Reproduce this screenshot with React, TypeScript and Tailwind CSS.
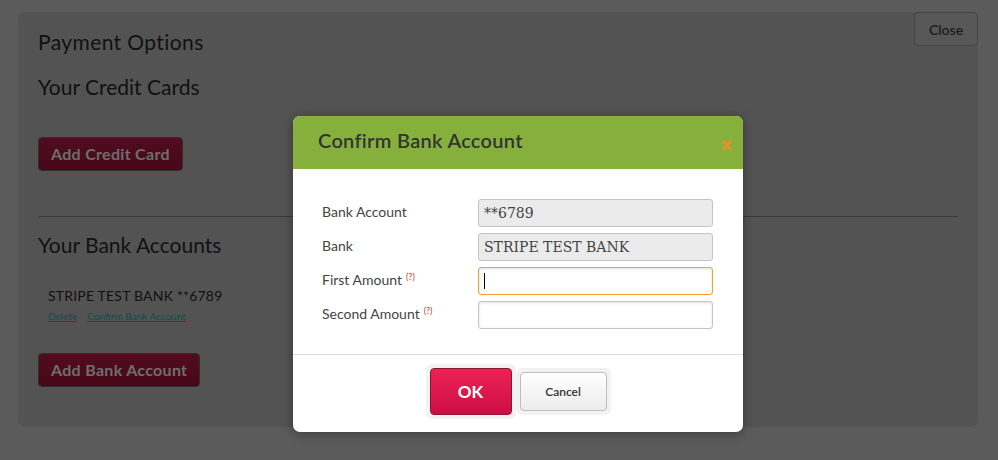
import React from "react";

const sans = { fontFamily: "Lato, 'Open Sans', sans-serif" };

function DimButton({ label }: { label: string }) {
  return (
    <button
      type="button"
      className="h-[34px] rounded-[4px] border border-[#2e2e2e] bg-gradient-to-b from-[#520c20] to-[#460819] px-[12px] text-[16px] font-bold tracking-[0.3px] text-[#6e6e6e]"
    >
      {label}
    </button>
  );
}

function Field({
  label,
  hint,
  value,
  readOnly,
  focused,
}: {
  label: string;
  hint?: boolean;
  value?: string;
  readOnly?: boolean;
  focused?: boolean;
}) {
  return (
    <div className="flex items-center">
      <div className="w-[156px] pb-[4px] text-[14px] text-[#444]">
        {label}
        {hint && <sup className="ml-[4px] text-[9px] text-[#e0302a]">(?)</sup>}
      </div>
      {readOnly ? (
        <div
          className="flex h-[28px] w-[235px] items-center rounded-[3px] border border-[#c4c4c4] bg-[#ebebeb] px-[5px] text-[14px] text-[#444]"
          style={{ fontFamily: "'DejaVu Serif', 'Liberation Serif', serif" }}
        >
          {value}
        </div>
      ) : (
        <div
          className={
            focused
              ? "flex h-[28px] w-[235px] items-center rounded-[3px] border border-[#f5a033] bg-white px-[5px] shadow-[inset_0_1px_3px_rgba(0,0,0,0.12)]"
              : "flex h-[28px] w-[235px] items-center rounded-[3px] border border-[#c4c4c4] bg-white px-[5px] shadow-[inset_0_1px_3px_rgba(0,0,0,0.12)]"
          }
        >
          {focused && <span className="h-[16px] w-px bg-black" />}
        </div>
      )}
    </div>
  );
}

export default function App() {
  return (
    <div className="relative h-[460px] w-[998px] overflow-hidden bg-[#5b5b5b]" style={sans}>
      <div className="px-[18px] pt-[12px]">
        <div className="relative h-[415px] w-[960px] rounded-[8px] bg-[#535353] px-[20px] pt-[16px]">
          <button
            type="button"
            className="absolute right-0 top-0 h-[34px] w-[64px] rounded-[4px] border border-[#444] bg-[#575757] text-[14px] font-semibold text-[#1b1b1b]"
          >
            Close
          </button>
          <div className="text-[21px] leading-[28px] tracking-[0.4px] text-[#111]">Payment Options</div>
          <div className="mt-[17px] text-[21px] leading-[28px] text-[#111]">Your Credit Cards</div>
          <div className="mt-[36px]">
            <DimButton label="Add Credit Card" />
          </div>
          <div className="mt-[45px] h-px w-[920px] bg-[#3a3a3a]" />
          <div className="mt-[14px] text-[21px] leading-[28px] text-[#111]">Your Bank Accounts</div>
          <div className="mt-[28px] pl-[10px]">
            <div className="text-[14px] leading-[18px] tracking-[0.2px] text-[#111]">STRIPE TEST BANK **6789</div>
            <div className="mt-[4px] flex gap-[10px] text-[10px] leading-[14px] text-[#0d4f47] underline">
              <span>Delete</span>
              <span>Confirm Bank Account</span>
            </div>
          </div>
          <div className="mt-[30px]">
            <DimButton label="Add Bank Account" />
          </div>
        </div>
      </div>

      <div className="absolute left-[293px] top-[116px] flex h-[316px] w-[450px] flex-col overflow-hidden rounded-[7px] bg-white shadow-[0_2px_12px_rgba(0,0,0,0.35)]">
        <div className="flex h-[53px] items-center justify-between bg-[#86b03c] pl-[25px] pr-[11px]">
          <span className="pb-[5px] text-[20px] font-semibold tracking-[0.3px] text-[#333]">Confirm Bank Account</span>
          <svg width="10" height="10" viewBox="0 0 10 10" className="mt-[4px]">
            <path d="M1.5 1.5 8.5 8.5M8.5 1.5 1.5 8.5" stroke="#f58a2b" strokeWidth="2.6" strokeLinecap="round" />
          </svg>
        </div>
        <div className="flex flex-col gap-[6px] pl-[29px] pt-[30px]">
          <Field label="Bank Account" value="**6789" readOnly />
          <Field label="Bank" value="STRIPE TEST BANK" readOnly />
          <Field label="First Amount" hint focused />
          <Field label="Second Amount" hint />
        </div>
        <div className="mt-[25px] h-px bg-[#dcdcdc]" />
        <div className="flex flex-1 items-start justify-center pt-[9px]">
          <div className="rounded-[6px] bg-[#f2f2f2] p-[4px]">
            <button
              type="button"
              className="h-[47px] w-[82px] rounded-[4px] border border-[#8c1434] bg-gradient-to-b from-[#ec2154] to-[#cc0e45] text-[17px] font-bold text-white"
            >
              OK
            </button>
          </div>
          <div className="mt-[4px] rounded-[6px] bg-[#f2f2f2] p-[4px]">
            <button
              type="button"
              className="h-[39px] w-[87px] rounded-[4px] border border-[#bdbdbd] bg-gradient-to-b from-white to-[#ececec] text-[12px] font-semibold text-[#333]"
            >
              Cancel
            </button>
          </div>
        </div>
      </div>
    </div>
  );
}
